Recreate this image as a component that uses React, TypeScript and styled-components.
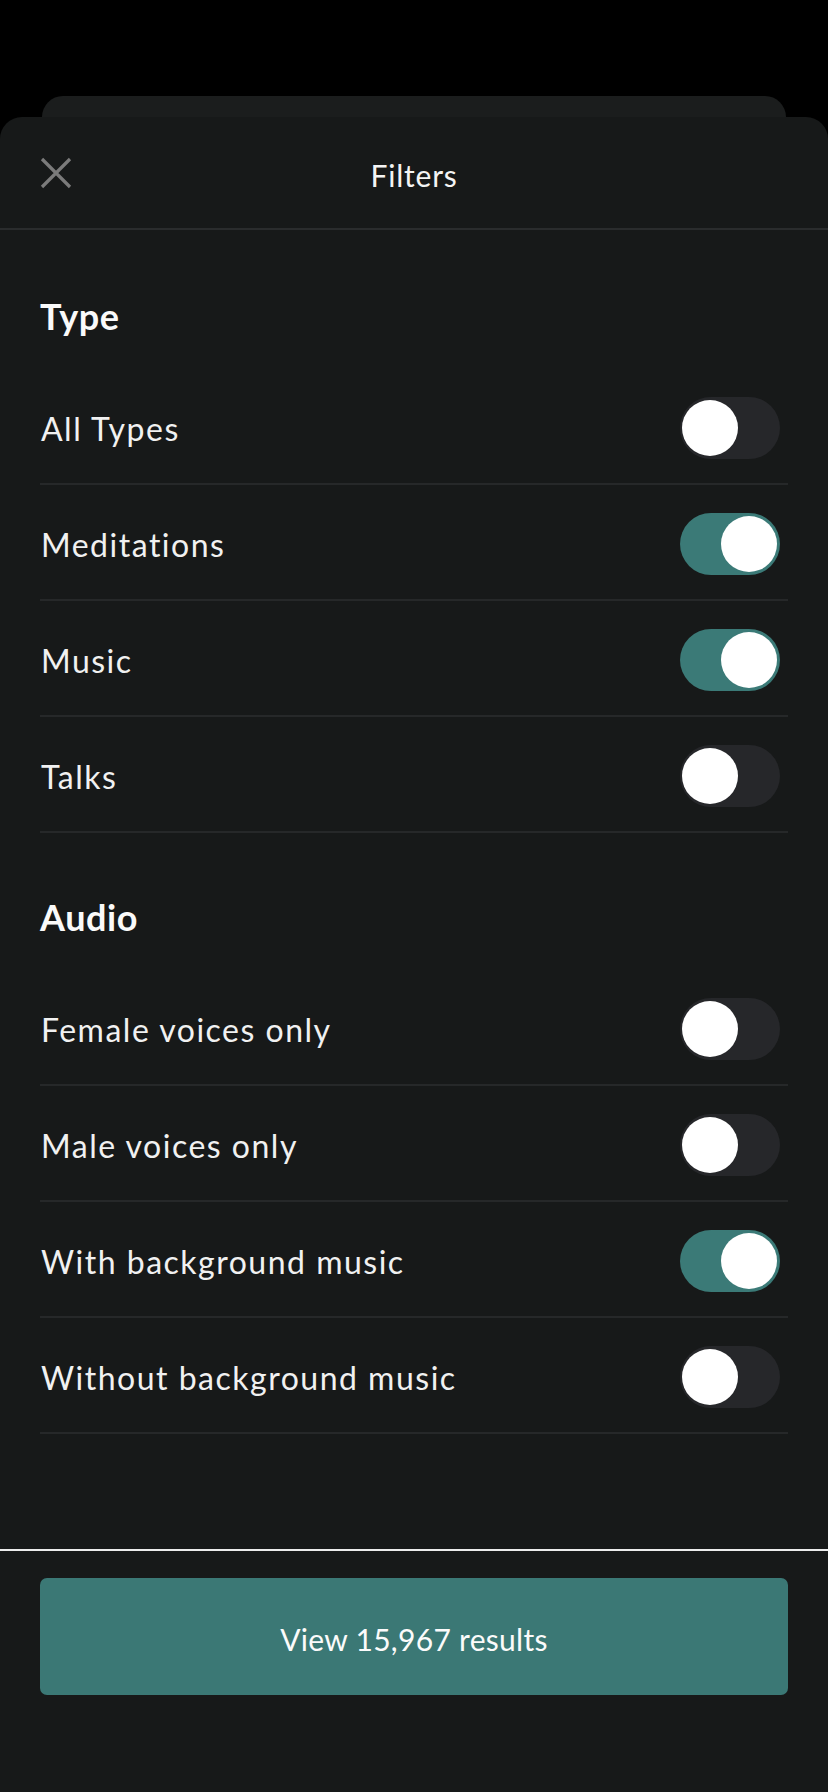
import React, { useState } from "react";
import styled, { createGlobalStyle } from "styled-components";

const GlobalStyle = createGlobalStyle`
  html, body {
    margin: 0;
    padding: 0;
    background: #000;
  }
  body {
    font-family: Lato, "Open Sans", sans-serif;
    -webkit-font-smoothing: antialiased;
  }
  * {
    box-sizing: border-box;
  }
`;

const Page = styled.div`
  height: 1792px;
  background: #000;
  padding-top: 96px;
  display: flex;
  flex-direction: column;
`;

const BackCard = styled.div`
  height: 21px;
  margin: 0 42px;
  background: #1b1d1d;
  border-radius: 22px 22px 0 0;
`;

const Sheet = styled.div`
  flex: 1;
  background: #171919;
  border-radius: 22px 22px 0 0;
  display: flex;
  flex-direction: column;
`;

const Header = styled.header`
  height: 113px;
  display: grid;
  grid-template-columns: 1fr auto 1fr;
  align-items: center;
  border-bottom: 2px solid #2a2c2d;
`;

const CloseButton = styled.button`
  justify-self: start;
  margin-left: 39px;
  width: 34px;
  height: 34px;
  padding: 0;
  border: none;
  background: transparent;
  display: flex;
  align-items: center;
  justify-content: center;
`;

const Title = styled.h1`
  margin: 4px 0 0;
  font-size: 30px;
  font-weight: 400;
  color: #f4f4f4;
  letter-spacing: 0.8px;
`;

const Content = styled.div`
  flex: 1;
  padding: 0 40px;
`;

const Section = styled.section<{ $first?: boolean }>`
  padding-top: ${(p) => (p.$first ? "66px" : "64px")};
`;

const Heading = styled.h2`
  margin: 0 0 33px;
  height: 40px;
  line-height: 40px;
  font-size: 36px;
  font-weight: 700;
  color: #fafafa;
  letter-spacing: 0.6px;
`;

const Row = styled.div`
  height: 116px;
  display: flex;
  align-items: center;
  justify-content: space-between;
  border-bottom: 2px solid #262829;
`;

const Label = styled.span`
  font-size: 32px;
  color: #f1f1f1;
  letter-spacing: 1.5px;
  padding-left: 1px;
  padding-top: 5px;
`;

const Track = styled.button<{ $on: boolean }>`
  position: relative;
  width: 100px;
  height: 62px;
  margin-right: 8px;
  margin-top: 3px;
  padding: 0;
  border: none;
  border-radius: 31px;
  background: ${(p) => (p.$on ? "#3b7a77" : "#26272a")};
  cursor: pointer;
`;

const Knob = styled.span<{ $on: boolean }>`
  position: absolute;
  top: 3px;
  left: ${(p) => (p.$on ? "41px" : "2px")};
  width: 56px;
  height: 56px;
  border-radius: 50%;
  background: #fff;
`;

const Footer = styled.footer`
  border-top: 2px solid #ececec;
  padding: 27px 40px 97px;
`;

const ResultsButton = styled.button`
  width: 100%;
  height: 117px;
  border: none;
  border-radius: 7px;
  background: #3b7875;
  color: #fbfbfb;
  font-family: Lato, "Open Sans", sans-serif;
  font-size: 30px;
  letter-spacing: 0.3px;
  padding-top: 5px;
`;

type Item = { label: string; on: boolean };

const initialType: Item[] = [
  { label: "All Types", on: false },
  { label: "Meditations", on: true },
  { label: "Music", on: true },
  { label: "Talks", on: false },
];

const initialAudio: Item[] = [
  { label: "Female voices only", on: false },
  { label: "Male voices only", on: false },
  { label: "With background music", on: true },
  { label: "Without background music", on: false },
];

const Toggle = ({ on, onClick }: { on: boolean; onClick: () => void }) => (
  <Track $on={on} onClick={onClick} aria-pressed={on}>
    <Knob $on={on} />
  </Track>
);

const FilterSection = ({
  title,
  items,
  setItems,
  first,
}: {
  title: string;
  items: Item[];
  setItems: (items: Item[]) => void;
  first?: boolean;
}) => (
  <Section $first={first}>
    <Heading>{title}</Heading>
    {items.map((item, i) => (
      <Row key={item.label}>
        <Label>{item.label}</Label>
        <Toggle
          on={item.on}
          onClick={() =>
            setItems(items.map((it, j) => (j === i ? { ...it, on: !it.on } : it)))
          }
        />
      </Row>
    ))}
  </Section>
);

const App = () => {
  const [types, setTypes] = useState<Item[]>(initialType);
  const [audio, setAudio] = useState<Item[]>(initialAudio);

  return (
    <>
      <GlobalStyle />
      <Page>
        <BackCard />
        <Sheet>
          <Header>
            <CloseButton aria-label="Close">
              <svg width="32" height="32" viewBox="0 0 32 32">
                <path
                  d="M2 2 L30 30 M30 2 L2 30"
                  stroke="#7b7b7b"
                  strokeWidth="3.2"
                  fill="none"
                />
              </svg>
            </CloseButton>
            <Title>Filters</Title>
            <span />
          </Header>
          <Content>
            <FilterSection title="Type" items={types} setItems={setTypes} first />
            <FilterSection title="Audio" items={audio} setItems={setAudio} />
          </Content>
          <Footer>
            <ResultsButton>View 15,967 results</ResultsButton>
          </Footer>
        </Sheet>
      </Page>
    </>
  );
};

export default App;
